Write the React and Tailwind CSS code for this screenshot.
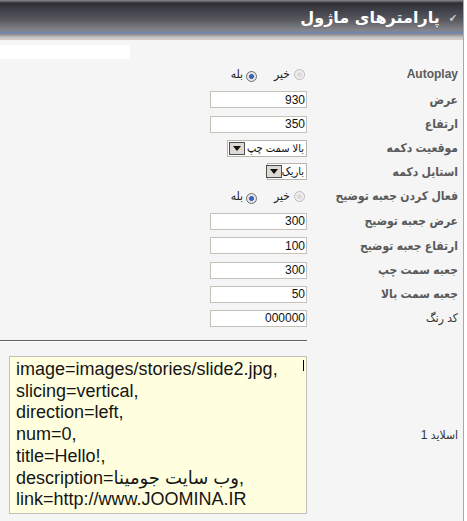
import React from 'react';

const font = "font-['Liberation_Sans','DejaVu_Sans_Condensed','DejaVu_Sans',sans-serif]";

const Radio = ({ checked }) => (
  <span
    className={`inline-flex items-center justify-center w-[11px] h-[11px] rounded-full border ${
      checked ? 'border-[#707070] bg-[#e4e4e4]' : 'border-[#bcbcbc] bg-[#eeeeee]'
    }`}
  >
    {checked ? <span className="w-[5px] h-[5px] rounded-full bg-[#3a6ad0] border border-[#2a4a90]" /> : <span className="w-[5px] h-[5px] rounded-full bg-[#dadada]" />}
  </span>
);

const YesNo = () => (
  <div className="flex items-center mr-[2px]">
    <Radio />
    <span className="mr-[4px] text-[12px] text-[#222]">خیر</span>
    <span className="mr-[17px]"><Radio checked /></span>
    <span className="mr-[3px] text-[12px] text-[#222]">بله</span>
  </div>
);

const TextInput = ({ value }) => (
  <div className="w-[97px] h-[17px] bg-white border border-[#c4c2b8] pl-[3px] flex items-center justify-end" dir="ltr">
    <span className="text-[12px] text-[#111] pr-[1px] leading-none">{value}</span>
  </div>
);

const Select = ({ value, width }) => (
  <div className={`${width} h-[17px] bg-white border border-[#b8b6ac] flex items-center`}>
    <span className="text-[11px] text-[#111] pr-[2px] whitespace-nowrap leading-none">{value}</span>
    <span className="mr-auto ml-[1px] w-[16px] h-[13px] shrink-0 border border-[#505050] bg-[#dcdad2] flex items-center justify-center">
      <svg width="8" height="5" viewBox="0 0 8 5">
        <path d="M0 0 L8 0 L4 5 Z" fill="#111" />
      </svg>
    </span>
  </div>
);

const Row = ({ label, h, bold = true, children }) => (
  <div className={`flex items-center ${h}`}>
    <div
      className={`w-[156px] shrink-0 pr-[5px] whitespace-nowrap ${
        bold ? 'text-[12px] font-bold text-[#5a5a5a]' : 'text-[12px] text-[#333]'
      }`}
    >
      {label}
    </div>
    <div className="flex items-center">{children}</div>
  </div>
);

export default function App() {
  const lines = [
    'image=images/stories/slide2.jpg,',
    'slicing=vertical,',
    'direction=left,',
    'num=0,',
    'title=Hello!,',
    'description=وب سایت جومینا,',
    'link=http://www.JOOMINA.IR',
  ];

  return (
    <div className={`w-[464px] h-[521px] bg-[#f5f5f5] border-r border-[#a8a8a8] ${font}`}>
      <div className="h-[40px] border-b-2 border-[#d0ccc4] bg-[linear-gradient(to_bottom,#8a8a8e_0%,#2e2e34_8%,#3c3c44_22%,#4c4c54_40%,#5c5c62_55%,#787880_72%,#84848a_80%,#6e88b4_86%,#8a8a90_90%,#b4b4b4_96%,#c8c8c8_100%)] flex items-center justify-start pr-[6px]" dir="rtl">
        <span className="text-[11px] text-[#c8c8c8] ml-[9px] -mt-[1px]">✔</span>
        <span className="text-[16px] font-bold text-white leading-none -mt-[2px] font-['DejaVu_Sans',sans-serif]">پارامترهای ماژول</span>
      </div>

      <div className="w-[130px] h-[14px] bg-white mt-[5px]" />

      <div dir="rtl" className="mt-[2px] w-[463px]">
        <Row label="Autoplay" h="h-[26px]">
          <YesNo />
        </Row>
        <Row label="عرض" h="h-[25px]">
          <TextInput value="930" />
        </Row>
        <Row label="ارتفاع" h="h-[24px]">
          <TextInput value="350" />
        </Row>
        <Row label="موقعیت دکمه" h="h-[24px]">
          <Select value="بالا سمت چپ" width="w-[80px]" />
        </Row>
        <Row label="استایل دکمه" h="h-[23px]">
          <Select value="باریک" width="w-[40px]" />
        </Row>
        <Row label="فعال کردن جعبه توضیح" h="h-[26px]">
          <YesNo />
        </Row>
        <Row label="عرض جعبه توضیح" h="h-[24px]">
          <TextInput value="300" />
        </Row>
        <Row label="ارتفاع جعبه توضیح" h="h-[25px]">
          <TextInput value="100" />
        </Row>
        <Row label="جعبه سمت چپ" h="h-[24px]">
          <TextInput value="300" />
        </Row>
        <Row label="جعبه سمت بالا" h="h-[24px]">
          <TextInput value="50" />
        </Row>
        <Row label="کد رنگ" h="h-[24px]" bold={false}>
          <TextInput value="000000" />
        </Row>

        <div className="mr-[156px] mt-[10px] border-t border-[#606060] border-b border-b-white" />

        <div className="flex items-center mt-[14px]">
          <div className="w-[156px] shrink-0 pr-[5px] text-[12px] text-[#333] whitespace-nowrap">اسلاید 1</div>
          <div
            dir="ltr"
            className="relative w-[298px] h-[158px] bg-[#ffffdf] border border-[#c4c2b8] pl-[6px] pt-[2px] text-[18px] leading-[21.7px] text-[#151515] overflow-hidden font-['Liberation_Sans','DejaVu_Sans',sans-serif]"
          >
            {lines.map((l) => (
              <div key={l} className="whitespace-nowrap">{l}</div>
            ))}
            <span className="absolute right-[2px] top-[3px] w-[1px] h-[11px] bg-black" />
          </div>
        </div>
      </div>
    </div>
  );
}
